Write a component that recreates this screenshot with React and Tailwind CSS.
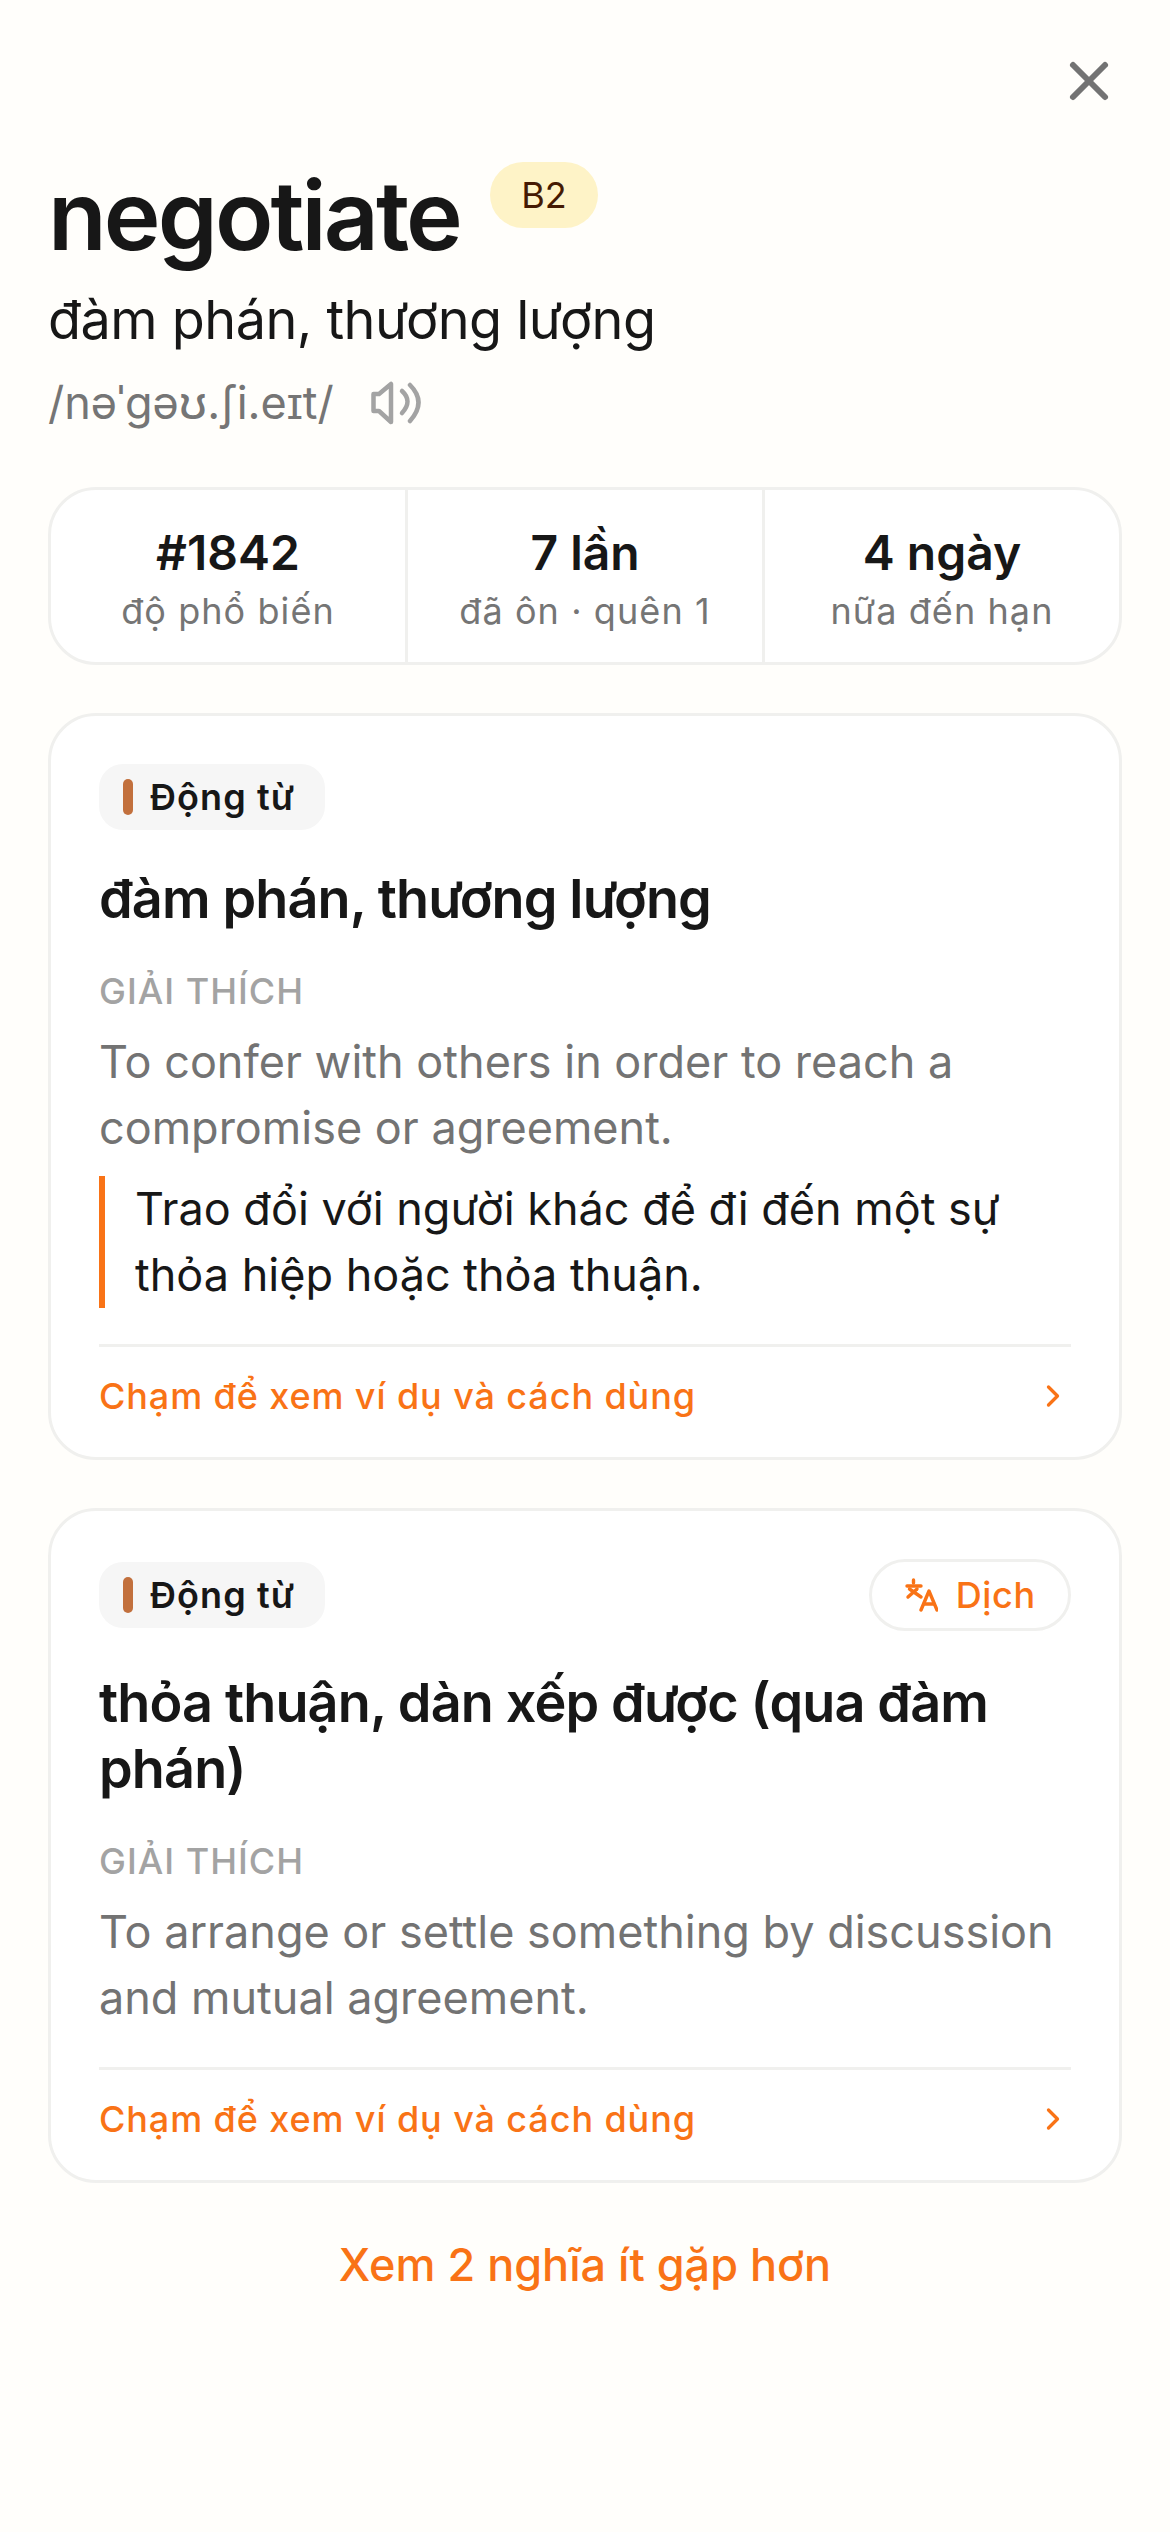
import { X, ChevronRight } from 'lucide-react';

function SpeakerIcon() {
  return (
    <svg width="54" height="46" viewBox="0 0 54 46" fill="none" stroke="#a3a3a3" strokeWidth="4.5" strokeLinecap="round" strokeLinejoin="round">
      <path d="M9 14 L21 4 V42 L9 31 H3.500 V14 Z" />
      <path d="M32 11 Q43 21 32 33" />
      <path d="M40 5 Q57 22 40 41" />
    </svg>
  );
}

function TranslateIcon() {
  return (
    <svg width="34" height="34" viewBox="0 0 34 34" fill="none" stroke="#f97316" strokeWidth="3.4" strokeLinecap="round" strokeLinejoin="round">
      <path d="M9.500 2v3" />
      <path d="M3 8h14" />
      <path d="M13 11 4 19" />
      <path d="M5.500 11 17 19" />
      <path d="M17 32 25 13l8 19" />
      <path d="M20 26h10" />
    </svg>
  );
}

function Stat({ value, label, border }) {
  return (
    <div className={`flex-1 flex flex-col items-center justify-center pt-[6px] ${border ? 'border-l-[3px] border-[#f0f0ee]' : ''}`}>
      <div className="text-[48px] leading-[60px] font-semibold text-[#171717]">{value}</div>
      <div className="mt-[4px] text-[36px] leading-[48px] text-[#757575] tracking-[1.08px]">{label}</div>
    </div>
  );
}

function PosTag() {
  return (
    <div className="inline-flex items-center h-[66px] pl-6 pr-[30px] gap-[17px] bg-[#f6f6f6] rounded-[24px]">
      <span className="w-[10px] h-[36px] rounded-full bg-[#c2703d]"></span>
      <span className="text-[36px] font-semibold tracking-[1.08px] text-[#171717]">Động từ</span>
    </div>
  );
}

function CardLink() {
  return (
    <div className="flex items-center justify-between border-t-[3px] border-[#f0f0ee] h-[100px] mt-9">
      <span className="text-[36px] font-medium tracking-[0.9px] text-[#f97316]">Chạm để xem ví dụ và cách dùng</span>
      <ChevronRight size={36} color="#f97316" strokeWidth={2.2} />
    </div>
  );
}

export default function App() {
  return (
    <div className="min-h-[2532px] bg-[#fffefb] font-['Inter',sans-serif] px-12 relative">
      <button className="absolute top-[49px] right-[49px] text-[#737373]">
        <X size={64} strokeWidth={2.25} />
      </button>

      <div className="pt-[155px] flex items-start">
        <h1 className="text-[96px] leading-[120px] font-semibold tracking-[-2.88px] text-[#171717]">negotiate</h1>
        <span className="ml-[30px] mt-[7px] h-[66px] w-[108px] flex items-center justify-center rounded-full bg-[#fef3c7] text-[36px] text-[#451a03]">B2</span>
      </div>
      <div className="text-[54px] leading-[66px] tracking-[-0.54px] text-[#171717] mt-[12px]">đàm phán, thương lượng</div>
      <div className="flex items-center mt-[20px] gap-[36px]">
        <span className="text-[45px] leading-[60px] text-[#757575]">/nəˈɡəʊ.ʃi.eɪt/</span>
        <SpeakerIcon />
      </div>

      <div className="mt-[54px] flex h-[178px] bg-white border-[3px] border-[#f0f0ee] rounded-[48px]">
        <Stat value="#1842" label="độ phổ biến" />
        <Stat value="7 lần" label="đã ôn · quên 1" border />
        <Stat value="4 ngày" label="nữa đến hạn" border />
      </div>

      <div className="mt-[48px] bg-white border-[3px] border-[#f0f0ee] rounded-[48px] px-12 pt-12 pb-[13px]">
        <PosTag />
        <div className="mt-[36px] text-[54px] leading-[66px] font-semibold tracking-[-0.87px] text-[#171717]">đàm phán, thương lượng</div>
        <div className="mt-[35px] text-[36px] leading-[48px] font-medium tracking-[1px] text-[#a3a3a3]">GIẢI THÍCH</div>
        <div className="mt-[14px] text-[45px] leading-[66px] text-[#737373]">To confer with others in order to reach a compromise or agreement.</div>
        <div className="mt-[15px] border-l-[6px] border-[#f97316] pl-[30px] text-[45px] leading-[66px] text-[#171717]">Trao đổi với người khác để đi đến một sự thỏa hiệp hoặc thỏa thuận.</div>
        <CardLink />
      </div>

      <div className="mt-[48px] bg-white border-[3px] border-[#f0f0ee] rounded-[48px] px-12 pt-[48px] pb-[13px]">
        <div className="flex items-center justify-between">
          <PosTag />
          <button className="h-[72px] pl-[32px] pr-[32px] flex items-center gap-[18px] border-[3px] border-[#f0f0ee] rounded-full text-[36px] font-medium tracking-[0.72px] text-[#f97316]">
            <TranslateIcon />
            Dịch
          </button>
        </div>
        <div className="mt-[39px] text-[54px] leading-[66px] font-semibold tracking-[-0.87px] text-[#171717]">thỏa thuận, dàn xếp được (qua đàm phán)</div>
        <div className="mt-[35px] text-[36px] leading-[48px] font-medium tracking-[1px] text-[#a3a3a3]">GIẢI THÍCH</div>
        <div className="mt-[14px] text-[45px] leading-[66px] text-[#737373]">To arrange or settle something by discussion and mutual agreement.</div>
        <CardLink />
      </div>

      <div className="mt-[48px] text-center text-[45px] font-medium text-[#f97316]">Xem 2 nghĩa ít gặp hơn</div>
    </div>
  );
}
